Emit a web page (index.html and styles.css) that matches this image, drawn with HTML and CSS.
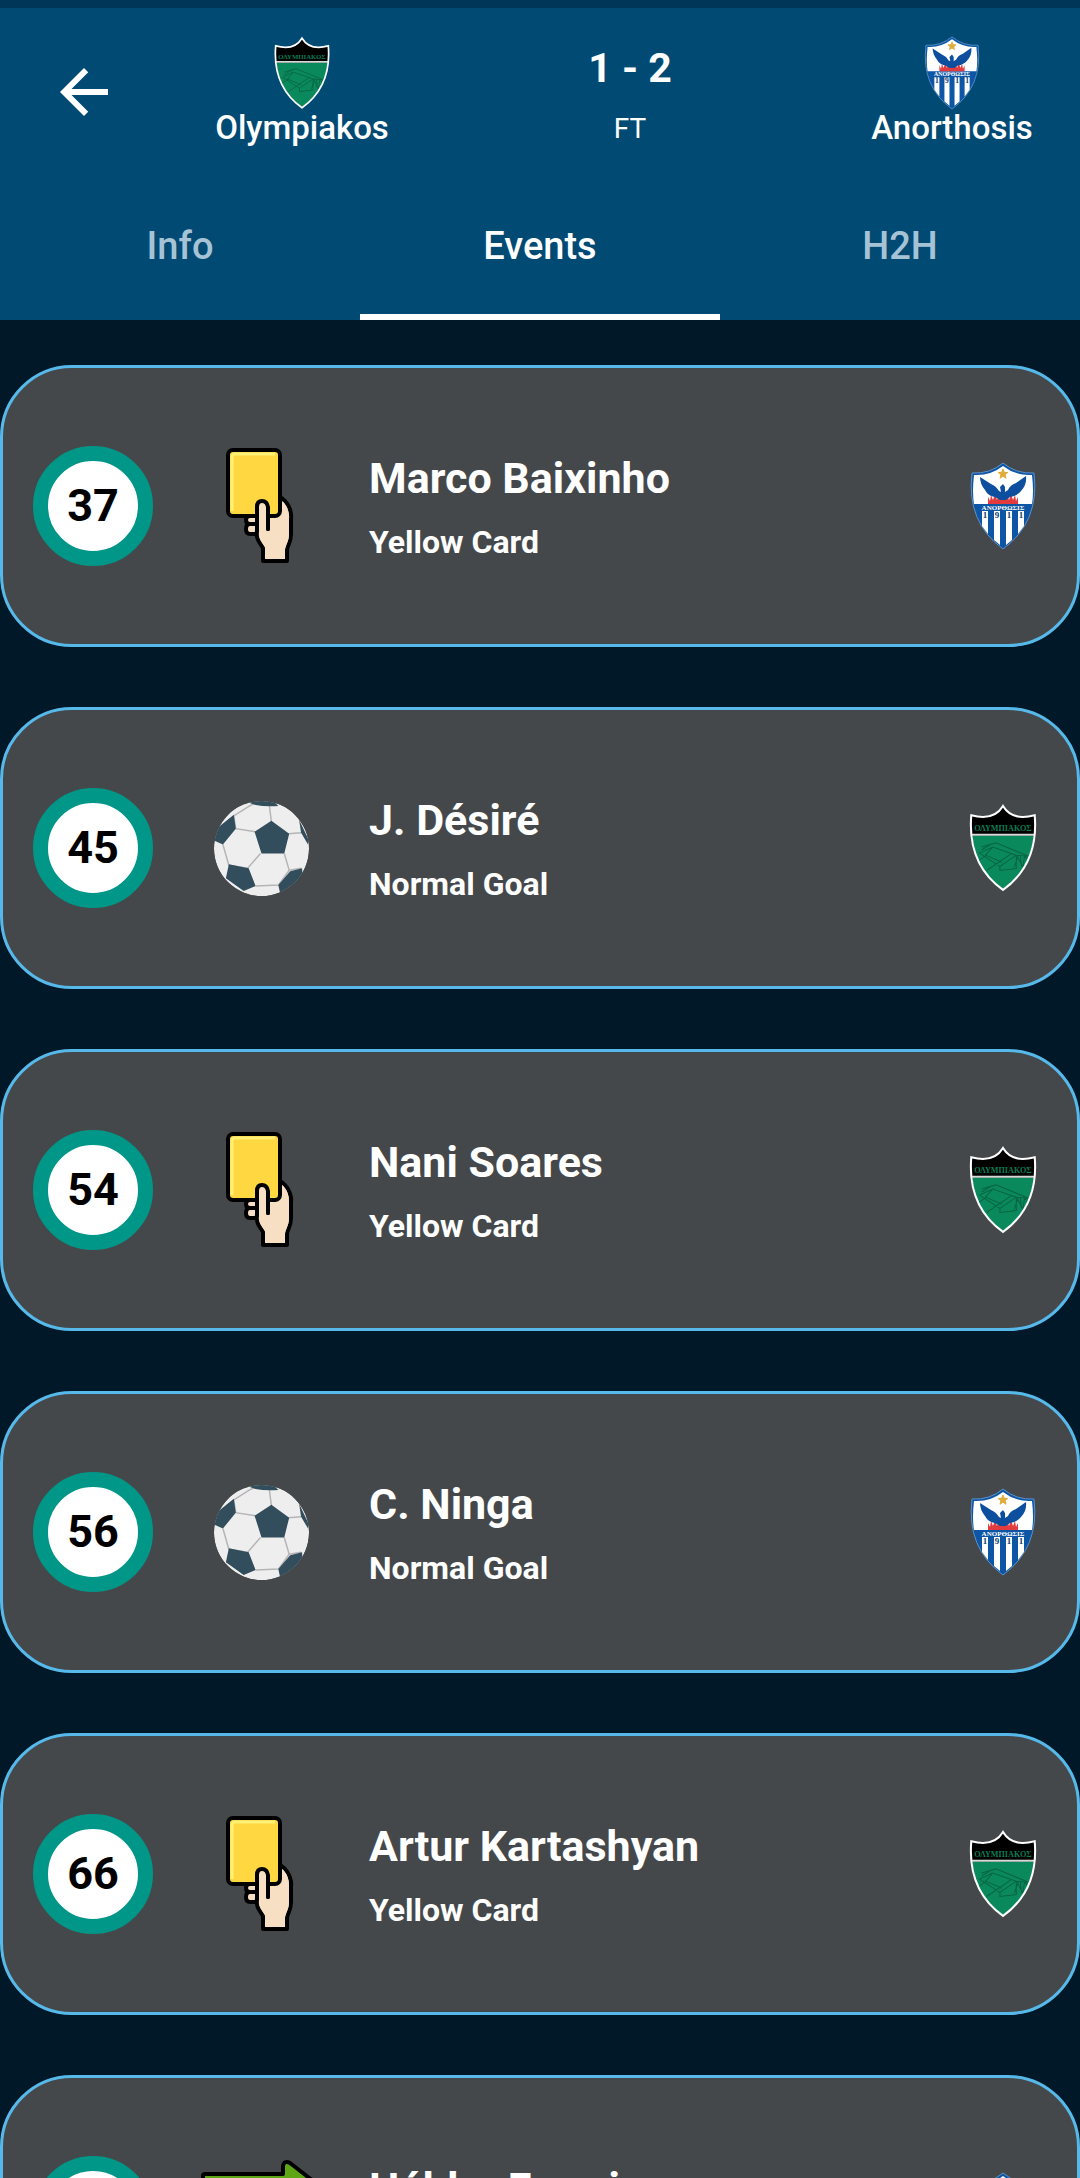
FILE: index.html
```
<!DOCTYPE html>
<html lang="en">
<head>
<meta charset="utf-8">
<meta name="viewport" content="width=device-width, initial-scale=1">
<title>Olympiakos 1 - 2 Anorthosis</title>
<link rel="stylesheet" href="styles.css">
</head>
<body>
<svg class="sprite" aria-hidden="true">
  <symbol id="olympiakos" viewBox="0 0 66 86">
    <path d="M33 2Q42 17 64 11Q68 59 33 84Q-2 59 2 11Q24 17 33 2Z" fill="#000"/>
    <path d="M3 31H63Q60 65 33 83Q6 65 3 31Z" fill="#0a8a5c"/>
    <path d="M2 30H64" stroke="#d5dbd8" stroke-width="2"/>
    <g fill="none" stroke="#086543" stroke-width="1">
      <path d="M12 42L26 38L58 51L46 50L30 61L10 48L23 42L46 50M22 39L12 45M23 42L16 50L32 57M8 56L17 50M17 65L42 48M30 61V65L46 63V50M47 51L53 63M48 50L44 62M50 50L51 61M54 51L60 57M54 51L52 65"/>
    </g>
    <text x="33" y="26" text-anchor="middle" class="crest-name crest-name-green">ΟΛΥΜΠΙΑΚΟΣ</text>
    <path d="M33 2Q42 17 64 11Q68 59 33 84Q-2 59 2 11Q24 17 33 2Z" fill="none" stroke="#fff" stroke-width="2"/>
  </symbol>
  <symbol id="anorthosis" viewBox="0 0 66 88">
    <path d="M33 1Q46 12 64 11Q70 60 33 87Q-4 60 2 11Q20 12 33 1Z" fill="#0d55a5" stroke="#5b92cb" stroke-width="1"/>
    <path d="M33 4Q46 14 62 13Q64 30 62 42H4Q2 30 4 13Q20 14 33 4Z" fill="#fff"/>
    <path d="M12 49h6v23l-6-8zM24 49h6v34l-6-5zM36 49h6v29l-6 5zM48 49h6v15l-6 8z" fill="#fff"/>
    <path d="M33 7l1.300 3.300 3.500.2-2.700 2.200.9 3.500-3-2-3 2 .9-3.500-2.700-2.200 3.500-.2z" fill="#e0ad3a" stroke="#e0ad3a"/>
    <path d="M18 42v-7l2 4 1-6 2 5 2-6 2 6 2-6 2 5 2-7 2 7 2-5 2 6 2-6 2 6 2-5 1 6 2-4v7z" fill="#e23b3f"/>
    <path d="M10 15L21 22Q26 24 29 29L31 30L30 25L33 22L35 25L35 30L38 28Q40 23 46 21L56 14Q57 23 51 29Q47 34 40 35L36 38H30L25 35Q18 34 15 28Q10 22 10 15Z" fill="#0d4f9e"/>
    <text x="33" y="48" text-anchor="middle" class="crest-name crest-name-white">ΑΝΟΡΘΩΣΙΣ</text>
    <g class="crest-year" text-anchor="middle"><text x="15" y="56">1</text><text x="27" y="56">9</text><text x="39" y="56">1</text><text x="51" y="56">1</text></g>
  </symbol>
  <symbol id="card" viewBox="0 0 72 118">
    <g stroke="#000" stroke-width="4" stroke-linejoin="round" stroke-linecap="round">
      <path d="M34 69h-9q-4 0-4 4t4 4h9" fill="#f7dfc3"/>
      <path d="M34 77h-9q-4 0-4 5t4 5h9" fill="#f7dfc3"/>
      <path d="M55 50C63 55 67 64 66 72V87C66 96 62 99 62 103V114H38V101C34 94 31 93 32 83V60H55Z" fill="#f7dfc3"/>
      <rect x="3" y="3" width="52" height="66" rx="5" fill="#ffd740"/>
      <path d="M32 84V60Q32 54 37 54T43 60V82" fill="#f7dfc3"/>
    </g>
    <path d="M7 64V10Q7 7 10 7H50" fill="none" stroke="#fff176" stroke-width="3"/>
    <path d="M34 66H41V84H54V72Q57 71 57 67V54C62 58 64 64 64 72V87C64 95 60 98 60 103V110H40V100C35 93 34 91 34 84Z" fill="#f7dfc3"/>
    <path d="M43 64V82" stroke="#000" stroke-width="4" stroke-linecap="round"/>
  </symbol>
  <symbol id="ball" viewBox="0 0 96 96">
    <circle cx="48" cy="48" r="48" fill="#eee"/>
    <path d="M56 5L58 21M42 31L22 28L20 15M20 15L36 5L42 2M75 33L88 32M71 53L76 70L65 85L42 86M47 53L34 68L15 65L9 44M34 68L41 86M76 70L88 68" fill="none" stroke="#b5b5b7" stroke-width="1.500"/>
    <path d="M58 20L76 33L71 53H48L41 31ZM0 30L20 14L22 28L9 44L0 40ZM15 64L35 68L42 86L30 91L12 78ZM65 85L77 71L89 68L90 84L67 94ZM36 2L42 4Q52 6 65 5L60 0H40ZM86 19L95 38V44L88 32Z" fill="#324d5b"/>
  </symbol>
  <symbol id="swap" viewBox="0 0 120 112">
    <g stroke="#000" stroke-width="4" stroke-linejoin="round">
      <path d="M4 14H82V6Q83 0 89 3L116 24Q119 27 116 30L89 51Q83 54 82 48V40H4Q2 40 2 38V16Q2 14 4 14Z" fill="#5fa617"/>
      <path d="M116 98H38V106Q37 112 31 109L4 88Q1 85 4 82L31 61Q37 58 38 64V72H116Q118 72 118 74V96Q118 98 116 98Z" fill="#d8342c"/>
    </g>
  </symbol>
</svg>

<div class="app">
  <header class="header">
    <div class="scoreboard">
      <button class="back" type="button" aria-label="Back">
        <svg viewBox="0 0 24 24" width="72" height="72"><path d="M20 11H7.830l5.590-5.590L12 4l-8 8 8 8 1.410-1.410L7.830 13H20v-2z" fill="#fff"/></svg>
      </button>
      <div class="team">
        <svg class="team-crest"><use href="#olympiakos"/></svg>
        <span class="team-name">Olympiakos</span>
      </div>
      <div class="score">
        <strong class="score-value">1 - 2</strong>
        <span class="score-state">FT</span>
      </div>
      <div class="team">
        <svg class="team-crest"><use href="#anorthosis"/></svg>
        <span class="team-name">Anorthosis</span>
      </div>
    </div>
    <nav class="tabs">
      <a class="tab" href="#info">Info</a>
      <a class="tab tab-active" href="#events" aria-current="page">Events</a>
      <a class="tab" href="#h2h">H2H</a>
    </nav>
  </header>

  <main class="events" id="events">
    <article class="event">
      <span class="minute">37</span>
      <span class="kind"><svg class="kind-card"><use href="#card"/></svg></span>
      <div class="detail"><h2 class="player">Marco Baixinho</h2><p class="type">Yellow Card</p></div>
      <svg class="event-crest"><use href="#anorthosis"/></svg>
    </article>
    <article class="event">
      <span class="minute">45</span>
      <span class="kind"><svg class="kind-ball"><use href="#ball"/></svg></span>
      <div class="detail"><h2 class="player">J. Désiré</h2><p class="type">Normal Goal</p></div>
      <svg class="event-crest"><use href="#olympiakos"/></svg>
    </article>
    <article class="event">
      <span class="minute">54</span>
      <span class="kind"><svg class="kind-card"><use href="#card"/></svg></span>
      <div class="detail"><h2 class="player">Nani Soares</h2><p class="type">Yellow Card</p></div>
      <svg class="event-crest"><use href="#olympiakos"/></svg>
    </article>
    <article class="event">
      <span class="minute">56</span>
      <span class="kind"><svg class="kind-ball"><use href="#ball"/></svg></span>
      <div class="detail"><h2 class="player">C. Ninga</h2><p class="type">Normal Goal</p></div>
      <svg class="event-crest"><use href="#anorthosis"/></svg>
    </article>
    <article class="event">
      <span class="minute">66</span>
      <span class="kind"><svg class="kind-card"><use href="#card"/></svg></span>
      <div class="detail"><h2 class="player">Artur Kartashyan</h2><p class="type">Yellow Card</p></div>
      <svg class="event-crest"><use href="#olympiakos"/></svg>
    </article>
    <article class="event">
      <span class="minute">70</span>
      <span class="kind"><svg class="kind-swap"><use href="#swap"/></svg></span>
      <div class="detail"><h2 class="player">Hélder Ferreira</h2><p class="type">Substitution</p></div>
      <svg class="event-crest"><use href="#anorthosis"/></svg>
    </article>
  </main>
</div>
</body>
</html>
```
FILE: styles.css
```
* { box-sizing: border-box; }

body {
  margin: 0;
  background: #001827;
  color: #fff;
  font-family: Roboto, "Liberation Sans", sans-serif;
}

.sprite { display: none; }

.app {
  display: flex;
  flex-direction: column;
  height: 100vh;
}

.header {
  flex: none;
  background: #004a74;
  border-top: 8px solid #003657;
}

.scoreboard {
  display: grid;
  grid-template-columns: 168px 268px 1fr 256px;
  align-items: start;
  height: 168px;
}

.back {
  margin: 48px 0 0 48px;
  padding: 0;
  width: 72px;
  height: 72px;
  border: 0;
  background: none;
}

.back svg { display: block; }

.team, .score {
  display: flex;
  flex-direction: column;
  align-items: center;
}

.team { padding-top: 28px; }

.team-crest { width: 56px; height: 74px; }

.team-name {
  font-size: 33px;
  font-weight: 500;
  line-height: 36px;
}

.score { padding-top: 36px; }

.score-value {
  font-size: 41px;
  font-weight: 700;
  line-height: 48px;
}

.score-state {
  margin-top: 21px;
  font-size: 28px;
  line-height: 32px;
}

.tabs { display: flex; }

.tab {
  flex: 1;
  height: 144px;
  padding-top: 48px;
  border-bottom: 6px solid transparent;
  color: #a6c3d6;
  font-size: 38px;
  font-weight: 500;
  line-height: 44px;
  text-align: center;
  text-decoration: none;
}

.tab-active { color: #fff; border-bottom-color: #fff; }

.events {
  flex: 1;
  display: flex;
  flex-direction: column;
  gap: 60px;
  min-height: 0;
  padding: 45px 0;
  overflow-y: auto;
  scrollbar-width: none;
}

.event {
  flex: none;
  display: flex;
  align-items: center;
  min-height: 282px;
  padding: 0 40px 0 30px;
  border: 3px solid #56b9ea;
  border-radius: 72px;
  background: #45484a;
}

.minute {
  display: flex;
  align-items: center;
  justify-content: center;
  width: 120px;
  height: 120px;
  border: 15px solid #009688;
  border-radius: 50%;
  background: #fff;
  color: #000;
  font-size: 45px;
  font-weight: 700;
  line-height: 48px;
}

.kind {
  display: flex;
  justify-content: center;
  width: 216px;
}

.kind-card { width: 72px; height: 118px; }
.kind-ball { width: 95px; height: 95px; border-radius: 50%; }
.kind-swap { width: 120px; height: 112px; }

.detail { flex: 1; padding-top: 8px; }

.player {
  margin: 0;
  font-size: 43px;
  font-weight: 700;
  line-height: 56px;
}

.type {
  margin: 8px 0 0;
  font-size: 32px;
  font-weight: 700;
  line-height: 56px;
}

.event-crest { width: 68px; height: 88px; }

.crest-name { font-family: "Liberation Serif", serif; font-weight: 700; }
.crest-name-green { font-size: 8px; fill: #0b7d55; }
.crest-name-white { font-size: 7px; fill: #fff; }
.crest-year { font-family: "Liberation Serif", serif; font-size: 9px; font-weight: 700; fill: #0d4070; }
```
